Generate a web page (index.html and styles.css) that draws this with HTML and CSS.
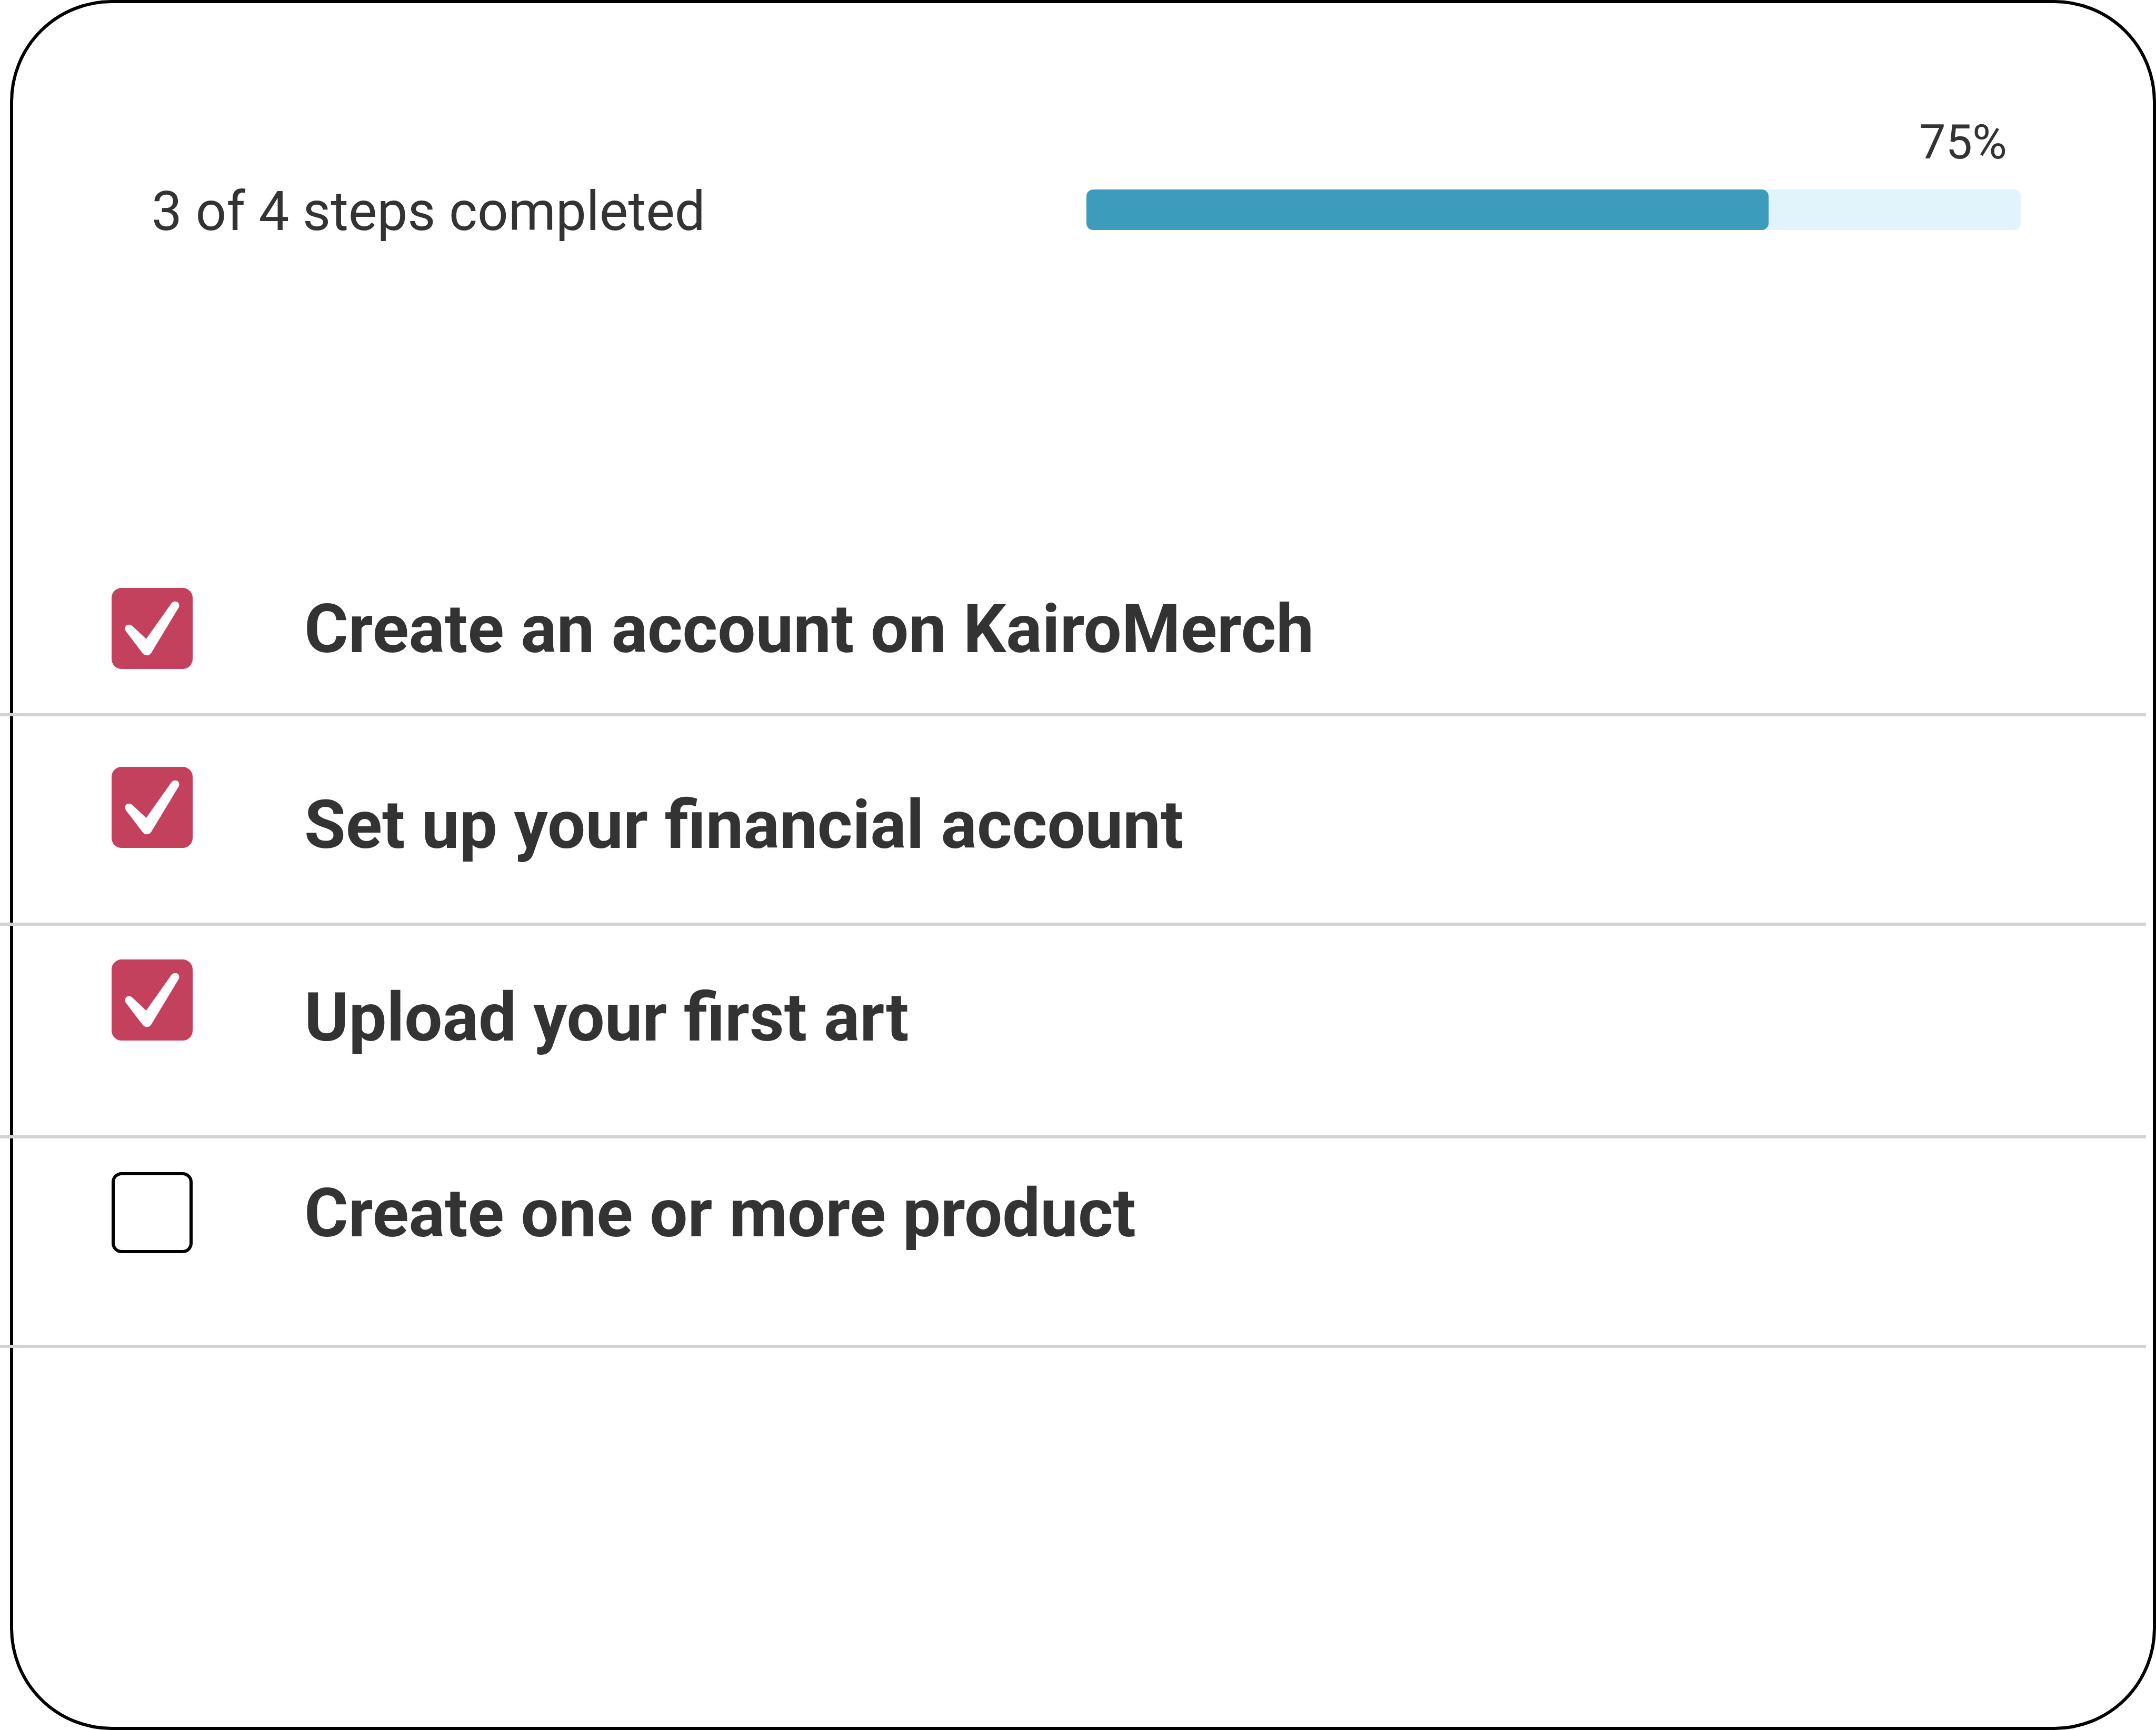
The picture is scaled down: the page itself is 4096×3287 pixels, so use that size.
FILE: index.html
```html
<!DOCTYPE html>
<html lang="en">
<head>
<meta charset="utf-8">
<title>KairoMerch setup steps</title>
<link rel="stylesheet" href="styles.css">
</head>
<body>
<main class="card">
  <header class="summary">
    <p class="summary-text" id="summary">3 of 4 steps completed</p>
    <div class="progress">
      <span class="progress-value">75%</span>
      <div class="progress-track" role="progressbar" aria-labelledby="summary" aria-valuenow="75" aria-valuemin="0" aria-valuemax="100">
        <div class="progress-fill" style="width: 73%"></div>
      </div>
    </div>
  </header>
  <ul class="steps">
    <li class="step step-first">
      <span class="check">
        <input class="check-box" type="checkbox" id="step-account" checked>
        <svg class="check-mark" viewBox="0 0 192 192" aria-hidden="true"><path d="M34 103C29 95 33 87 42 87C45 87 48 89 50 91L82 121L142 36C145 33 147 32 151 32C157 32 161 37 160 43C160 45 159 47 158 48L94 154C91 158 88 160 84 160C79 160 76 158 73 154Z"/></svg>
      </span>
      <label class="step-label" for="step-account">Create an account on KairoMerch</label>
    </li>
    <li class="step step-spaced">
      <span class="check">
        <input class="check-box" type="checkbox" id="step-financial" checked>
        <svg class="check-mark" viewBox="0 0 192 192" aria-hidden="true"><path d="M34 103C29 95 33 87 42 87C45 87 48 89 50 91L82 121L142 36C145 33 147 32 151 32C157 32 161 37 160 43C160 45 159 47 158 48L94 154C91 158 88 160 84 160C79 160 76 158 73 154Z"/></svg>
      </span>
      <label class="step-label step-label-low" for="step-financial">Set up your financial account</label>
    </li>
    <li class="step step-tall">
      <span class="check">
        <input class="check-box" type="checkbox" id="step-upload" checked>
        <svg class="check-mark" viewBox="0 0 192 192" aria-hidden="true"><path d="M34 103C29 95 33 87 42 87C45 87 48 89 50 91L82 121L142 36C145 33 147 32 151 32C157 32 161 37 160 43C160 45 159 47 158 48L94 154C91 158 88 160 84 160C79 160 76 158 73 154Z"/></svg>
      </span>
      <label class="step-label step-label-low" for="step-upload">Upload your first art</label>
    </li>
    <li class="step">
      <span class="check">
        <input class="check-box" type="checkbox" id="step-product">
      </span>
      <label class="step-label" for="step-product">Create one or more product</label>
    </li>
  </ul>
</main>
</body>
</html>
```
FILE: styles.css
```css
* {
  box-sizing: border-box;
}

body {
  margin: 0;
  background: #fff;
  color: #333;
  font-family: Roboto, sans-serif;
}

.card {
  min-height: 100vh;
  margin-left: 19px;
  border: 6px solid #000;
  border-radius: 193px;
  background: #fff;
}

.summary {
  display: flex;
  justify-content: space-between;
  align-items: flex-end;
  padding: 212px 251px 0 263px;
}

.summary-text {
  margin: 0 0 -25px;
  font-size: 103px;
  line-height: 120px;
}

.progress {
  display: flex;
  flex-direction: column;
  width: 50%;
  gap: 36px;
}

.progress-value {
  padding-right: 26px;
  font-size: 90px;
  line-height: 106px;
  text-align: right;
}

.progress-track {
  height: 77px;
  border-radius: 13px;
  background: #e1f4fb;
}

.progress-fill {
  height: 100%;
  border-radius: 13px;
  background: #3d9cbc;
}

.steps {
  margin: 616px 13px 0 -25px;
  padding: 0;
  list-style: none;
}

.step {
  display: flex;
  align-items: flex-start;
  gap: 212px;
  min-height: 398px;
  padding: 64px 212px 0;
  border-bottom: 6px solid #d3d3d3;
}

.step-first {
  min-height: 308px;
}

.step-spaced {
  padding-top: 96px;
}

.step-tall {
  min-height: 404px;
}

.check {
  display: grid;
  width: 154px;
  height: 154px;
}

.check-box,
.check-mark {
  grid-area: 1 / 1;
  width: 100%;
  height: 100%;
}

.check-box {
  appearance: none;
  margin: 0;
  border: 6px solid #000;
  border-radius: 19px;
  background: #fff;
}

.check-box:checked {
  border-color: #c4415e;
  background: #c4415e;
}

.check-mark {
  fill: #fff;
  pointer-events: none;
}

.step-label {
  font-size: 128px;
  font-weight: 700;
  line-height: 157px;
}

.step-label-low {
  padding-top: 32px;
}
```
